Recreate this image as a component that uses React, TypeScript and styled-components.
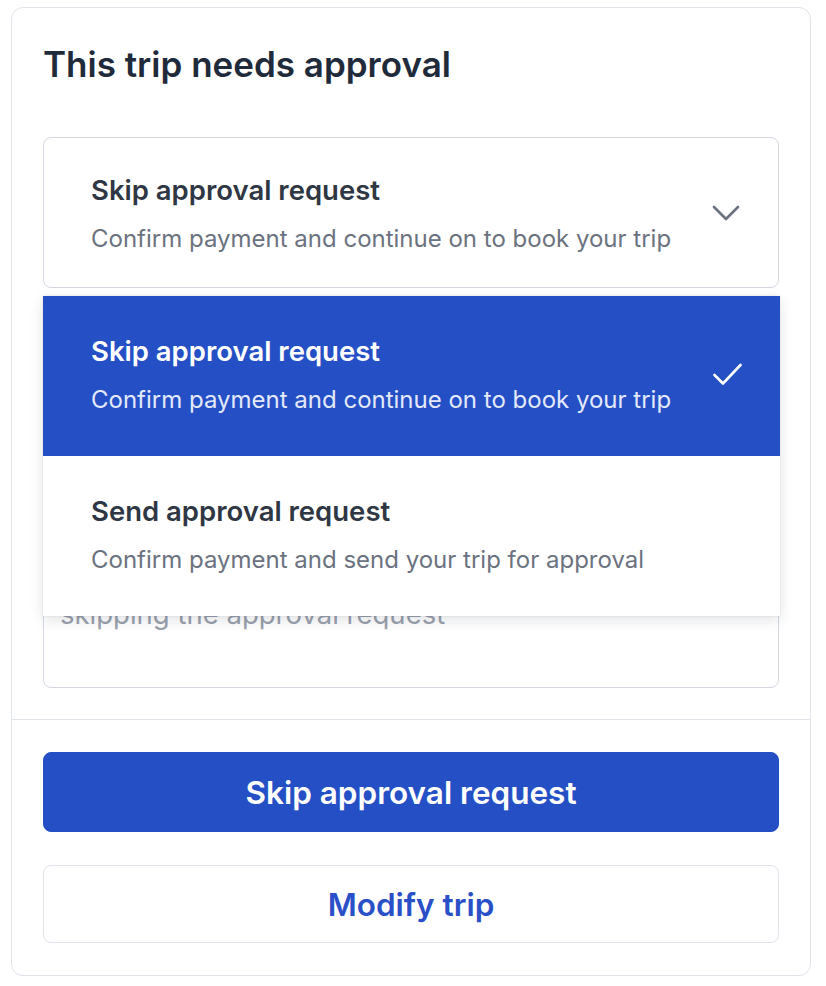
import React from "react";
import styled, { createGlobalStyle } from "styled-components";

const Global = createGlobalStyle`
  html, body { margin: 0; padding: 0; background: #ffffff; }
  body { font-family: Inter, "Liberation Sans", sans-serif; -webkit-font-smoothing: antialiased; }
  * { box-sizing: border-box; }
`;

const Page = styled.div`
  padding: 7px 15px 10px 11px;
`;

const Card = styled.div`
  width: 800px;
  border: 1px solid #dfe3ea;
  border-radius: 12px;
  background: #ffffff;
  display: flex;
  flex-direction: column;
`;

const Body = styled.section`
  padding: 34px 31px 31px;
  border-bottom: 1px solid #dfe3ea;
  display: flex;
  flex-direction: column;
`;

const Title = styled.h2`
  margin: 0;
  font-size: 35px;
  line-height: 44px;
  font-weight: 600;
  color: #1f2b3b;
`;

const Field = styled.div`
  position: relative;
  margin-top: 51px;
`;

const Select = styled.div`
  height: 151px;
  border: 1px solid #d3d8e0;
  border-radius: 8px;
  display: flex;
  align-items: center;
  justify-content: space-between;
  padding: 2px 38px 0 47px;
`;

const OptionText = styled.div`
  display: flex;
  flex-direction: column;
  gap: 17px;
`;

const OptionTitle = styled.div<{ $inverse?: boolean }>`
  font-size: 27.5px;
  line-height: 34px;
  font-weight: 600;
  color: ${(p) => (p.$inverse ? "#ffffff" : "#2f3744")};
`;

const OptionSub = styled.div<{ $inverse?: boolean }>`
  font-size: 24px;
  line-height: 30px;
  font-weight: 400;
  color: ${(p) => (p.$inverse ? "#e3e9fa" : "#6b7280")};
`;

const Menu = styled.ul`
  position: absolute;
  top: calc(100% + 8px);
  left: 0;
  right: -1px;
  margin: 0;
  padding: 0;
  list-style: none;
  background: #ffffff;
  box-shadow: 0 4px 14px rgba(16, 24, 40, 0.12), 0 0 2px rgba(16, 24, 40, 0.1);
  z-index: 2;
`;

const MenuItem = styled.li<{ $selected?: boolean }>`
  height: 160px;
  display: flex;
  align-items: center;
  justify-content: space-between;
  padding: 0 38px 4px 48px;
  background: ${(p) => (p.$selected ? "#254fc5" : "#ffffff")};
`;

const TextArea = styled.div`
  margin-top: 264px;
  height: 136px;
  border: 1px solid #d3d8e0;
  border-radius: 8px;
  padding: 10px 16px;
  font-size: 27.5px;
  line-height: 34px;
  color: #9aa1ad;
`;

const Footer = styled.div`
  padding: 32px 31px;
  display: flex;
  flex-direction: column;
  gap: 33px;
`;

const Button = styled.button<{ $primary?: boolean }>`
  height: ${(p) => (p.$primary ? "80px" : "78px")};
  border-radius: 8px;
  border: 1px solid ${(p) => (p.$primary ? "#254fc5" : "#dfe3ea")};
  background: ${(p) => (p.$primary ? "#254fc5" : "#ffffff")};
  color: ${(p) => (p.$primary ? "#ffffff" : "#2a50c8")};
  font-family: Inter, "Liberation Sans", sans-serif;
  font-size: 31.5px;
  font-weight: 600;
  cursor: pointer;
`;

const Chevron = () => (
  <svg width="28" height="17" viewBox="0 0 28 17" fill="none">
    <path d="M2 2 L14 14 L26 2" stroke="#6b7280" strokeWidth="2.7" strokeLinecap="round" strokeLinejoin="round" />
  </svg>
);

const Check = () => (
  <svg width="29" height="23" viewBox="0 0 29 23" fill="none">
    <path d="M1.5 12 L10 20.5 L27.5 2" stroke="#ffffff" strokeWidth="2.6" strokeLinecap="round" strokeLinejoin="round" />
  </svg>
);

export default function App() {
  return (
    <Page>
      <Global />
      <Card>
        <Body>
          <Title>This trip needs approval</Title>
          <Field>
            <Select>
              <OptionText>
                <OptionTitle>Skip approval request</OptionTitle>
                <OptionSub>Confirm payment and continue on to book your trip</OptionSub>
              </OptionText>
              <Chevron />
            </Select>
            <Menu>
              <MenuItem $selected>
                <OptionText>
                  <OptionTitle $inverse>Skip approval request</OptionTitle>
                  <OptionSub $inverse>Confirm payment and continue on to book your trip</OptionSub>
                </OptionText>
                <Check />
              </MenuItem>
              <MenuItem>
                <OptionText>
                  <OptionTitle>Send approval request</OptionTitle>
                  <OptionSub>Confirm payment and send your trip for approval</OptionSub>
                </OptionText>
              </MenuItem>
            </Menu>
          </Field>
          <TextArea>
            Let us know your reason for
            <br />
            skipping the approval request
          </TextArea>
        </Body>
        <Footer>
          <Button $primary>Skip approval request</Button>
          <Button>Modify trip</Button>
        </Footer>
      </Card>
    </Page>
  );
}
